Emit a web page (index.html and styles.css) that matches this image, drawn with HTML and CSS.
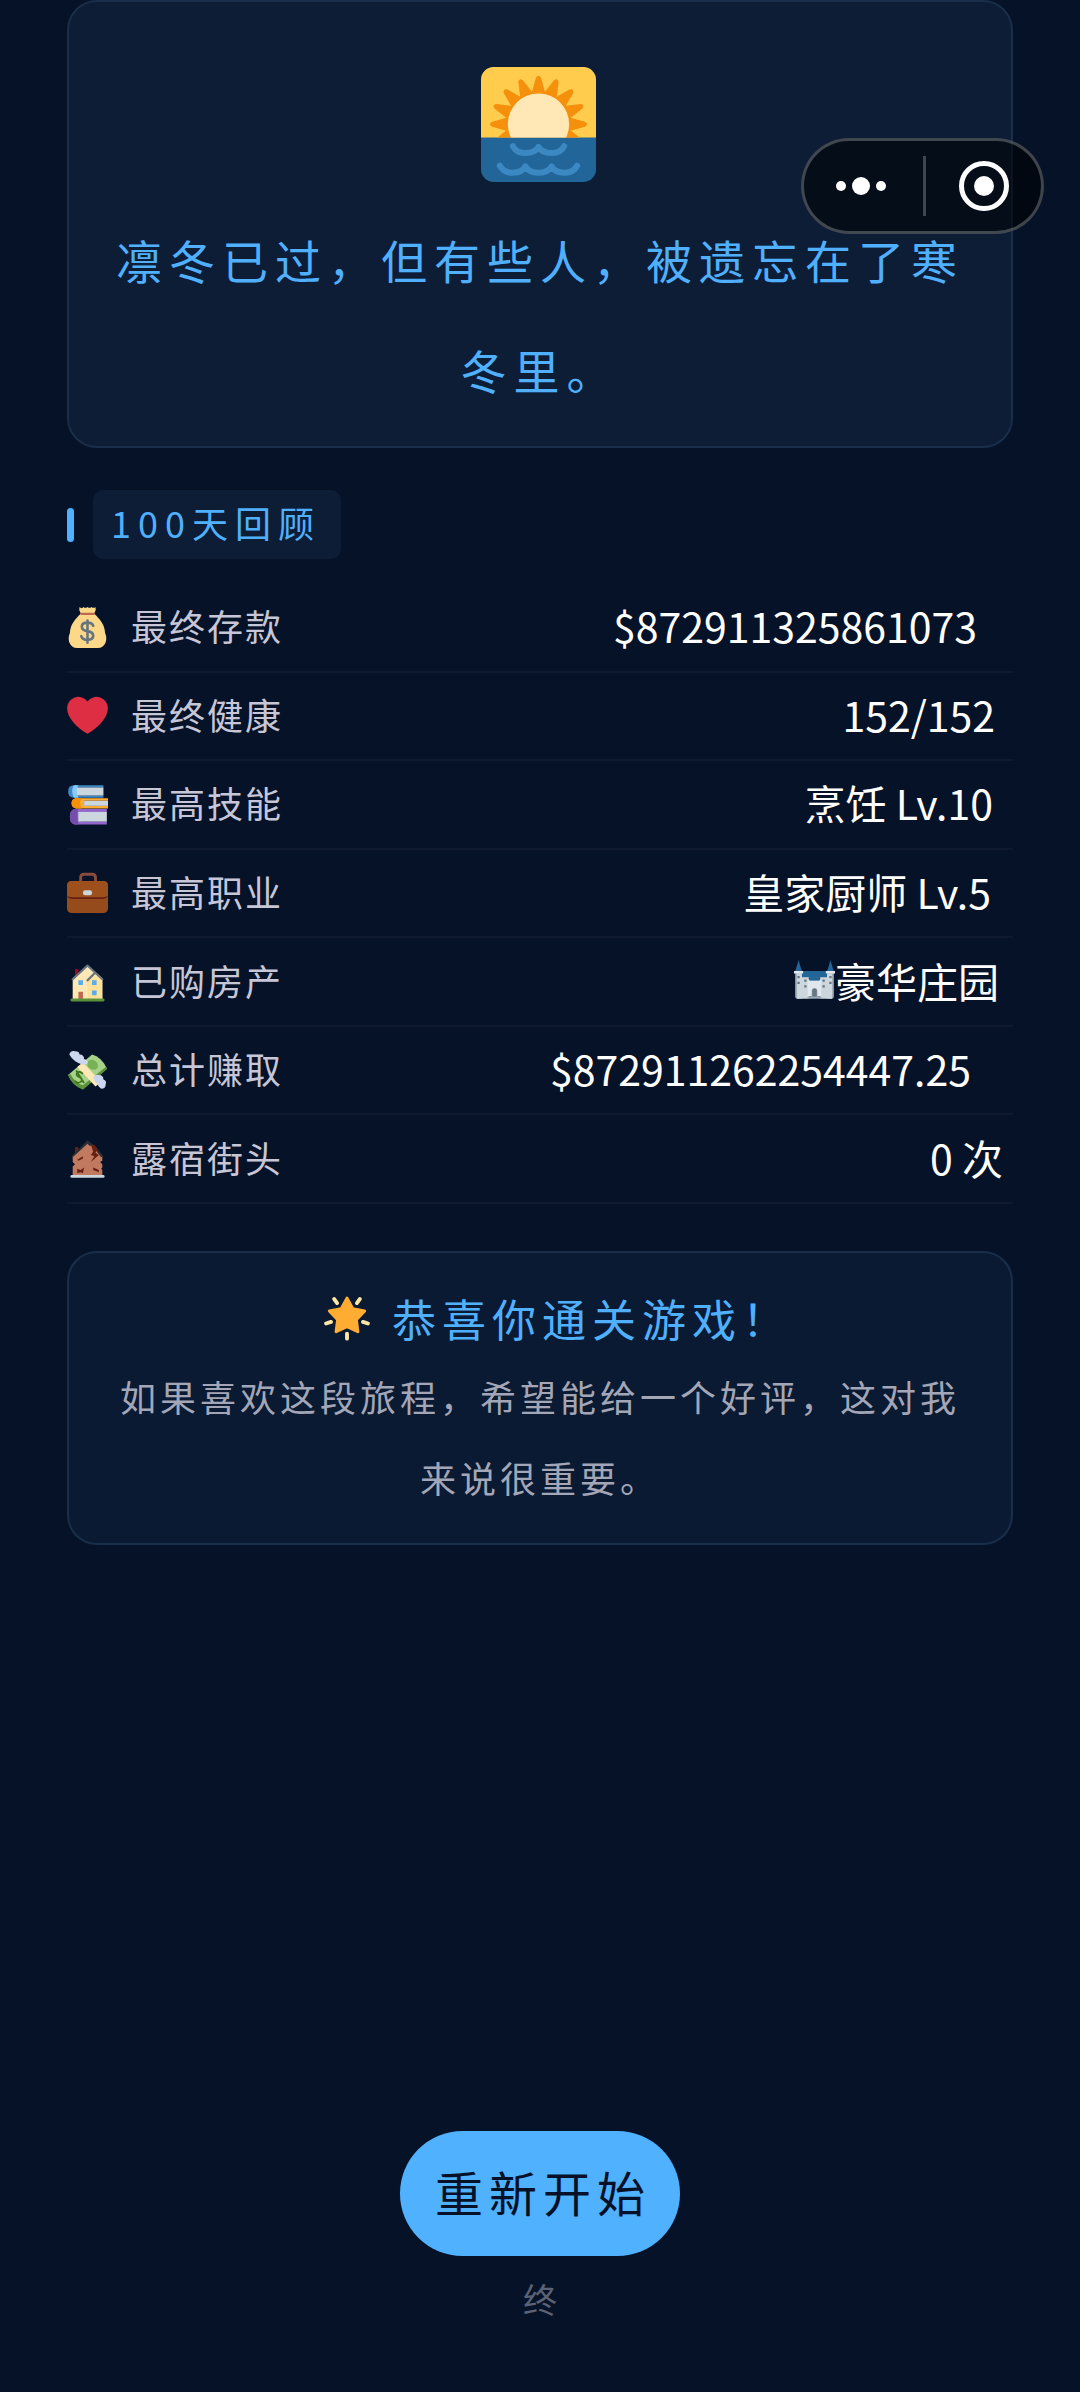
FILE: index.html
```html
<!DOCTYPE html>
<html lang="zh-CN">
<head>
<meta charset="utf-8">
<meta name="viewport" content="width=device-width, initial-scale=1">
<title>100天回顾</title>
<link rel="stylesheet" href="styles.css">
</head>
<body>
<nav class="capsule" aria-label="小程序菜单">
  <button class="capsule-button capsule-more" type="button" aria-label="更多">
    <svg width="52" height="20" viewBox="0 0 52 20" fill="#fff"><circle cx="6" cy="10" r="5"/><circle cx="26" cy="10" r="9"/><circle cx="46" cy="10" r="5"/></svg>
  </button>
  <button class="capsule-button capsule-close" type="button" aria-label="关闭">
    <svg width="50" height="50" viewBox="0 0 50 50"><circle cx="25" cy="25" r="22.5" fill="none" stroke="#fff" stroke-width="5"/><circle cx="25" cy="25" r="10" fill="#fff"/></svg>
  </button>
</nav>
<main class="page">
  <section class="card ending">
    <svg class="ending-icon" viewBox="0 0 36 36" preserveAspectRatio="xMinYMid" aria-hidden="true">
      <defs>
        <clipPath id="sky"><path d="M4 0h28a4 4 0 0 1 4 4v18.100H0V4a4 4 0 0 1 4-4z"/></clipPath>
        <path id="ray" d="M15.500 9.500L17.200 3.400Q18 2 18.800 3.400L20.500 9.500z"/>
      </defs>
      <rect width="36" height="36" rx="4" fill="#226699"/>
      <g clip-path="url(#sky)">
        <path d="M0 0h36v23H0z" fill="#ffcc4d"/>
        <g fill="#f4900c">
          <use href="#ray"/>
          <use href="#ray" transform="rotate(22.500 18 17.900)"/><use href="#ray" transform="rotate(45 18 17.900)"/><use href="#ray" transform="rotate(67.500 18 17.900)"/><use href="#ray" transform="rotate(90 18 17.900)"/><use href="#ray" transform="rotate(112.500 18 17.900)"/>
          <use href="#ray" transform="rotate(-22.500 18 17.900)"/><use href="#ray" transform="rotate(-45 18 17.900)"/><use href="#ray" transform="rotate(-67.500 18 17.900)"/><use href="#ray" transform="rotate(-90 18 17.900)"/><use href="#ray" transform="rotate(-112.500 18 17.900)"/>
        </g>
        <circle cx="18" cy="17.900" r="9.600" fill="#ffe8b6"/>
      </g>
      <path d="M10 24.800Q11 26.900 13.800 26.900Q17 26.900 18 25Q19 26.900 22.200 26.900Q25 26.900 26 24.800M5.900 30.900Q7 33.100 9.800 33.100Q13 33.100 13.900 31.100Q15 33.100 18 33.100Q21 33.100 22.100 31.100Q23 33.100 26.200 33.100Q29 33.100 30.100 30.900" fill="none" stroke="#3b88c3" stroke-width="1.900" stroke-linecap="round" stroke-linejoin="round"/>
    </svg>
    <h1 class="ending-text">凛冬已过，但有些人，被遗忘在了寒冬里。</h1>
  </section>

  <div class="section-head">
    <span class="section-bar"></span>
    <h2 class="section-title">100天回顾</h2>
  </div>

  <table class="stats">
    <tbody>
      <tr>
        <th scope="row"><span class="label">
          <svg class="icon" viewBox="0 0 36 36" aria-hidden="true"><path d="M12 6h12c5 5 9 9 9.500 17C36 28 34 36 27 36H9C2 36 0 28 2.500 23 3 15 7 11 12 6z" fill="#fdd888"/><path d="M11 0q2 2 3.500 0 1.500 1.500 3.500 0 2 1.500 3.500 0 2 1.500 3.500 0 1 3-1 5.500H12Q10 3 11 0z" fill="#fdd888"/><path d="M12.500 6h11" stroke="#bf6952" stroke-width="2" stroke-linecap="round"/><path d="M23 16.500q-1-2.800-5-2.800-5 0-5 3.600 0 3 5 3.900t5 4.100q0 3.600-5 3.600-4.500 0-5.500-3.300M18 11.800v19.500" fill="none" stroke="#67757f" stroke-width="2.300" stroke-linecap="round"/></svg>
          最终存款</span></th>
        <td style="--chars:16">$872911325861073</td>
      </tr>
      <tr>
        <th scope="row"><span class="label">
          <svg class="icon" viewBox="0 0 36 36" aria-hidden="true"><path d="M35.900 11.800A9.900 9.900 0 0 0 18 5.700 9.900 9.900 0 0 0 .1 11.800C.1 20 9 29 18 34c9-5 17.900-14 17.900-22.200z" fill="#dd2e44"/></svg>
          最终健康</span></th>
        <td style="--chars:7">152/152</td>
      </tr>
      <tr>
        <th scope="row"><span class="label">
          <svg class="icon" viewBox="0 0 36 36" aria-hidden="true"><path d="M6 1h26v2H8v7h24v2H6Q1 12 1 6.500T6 1z" fill="#3b88c3"/><path d="M8 3h24v7H8Q6 6.500 8 3z" fill="#ccd6dd"/><path d="M6 1h4q-3 5 0 11H6Q3 6 6 1z" fill="#88c9f9"/><path d="M8 12.500h28v2.300H15v4.400h21v2.300H8q-4-.5-4-4.500t4-4.500z" fill="#ffac33"/><path d="M15 14.800h21v4.400H15z" fill="#ccd6dd"/><path d="M8 12.500h5q-3 4 0 9H8q-4-.5-4-4.500t4-4.500z" fill="#f4900c"/><path d="M7 22h28v2.500H12v8.500h23v2.500H7Q2.500 35 2.500 28.700T7 22z" fill="#9266cc"/><path d="M10 24.500h25V33H10z" fill="#ccd6dd"/><path d="M7 22h3q-2 6 0 13.500H7Q2.500 35 2.500 28.700T7 22z" fill="#744eaa"/></svg>
          最高技能</span></th>
        <td style="--chars:8">烹饪 Lv.10</td>
      </tr>
      <tr>
        <th scope="row"><span class="label">
          <svg class="icon" viewBox="0 0 36 36" aria-hidden="true"><path d="M12 9V5q0-3 3-3h7q3 0 3 3v4" fill="none" stroke="#8a4b38" stroke-width="2.600"/><rect y="8" width="36" height="28" rx="4" fill="#954b1b"/><path d="M1 21q1 2 4 2h26q3 0 4-2" fill="none" stroke="#662113" stroke-width="1.600"/><path d="M4 8h28q4 0 4 4v7q0 3-4 3H4q-4 0-4-3v-7q0-4 4-4z" fill="#9d4f1c"/><rect x="14" y="16" width="8" height="4.500" rx="2" fill="#ccd6dd"/></svg>
          最高职业</span></th>
        <td style="--chars:9">皇家厨师 Lv.5</td>
      </tr>
      <tr>
        <th scope="row"><span class="label">
          <svg class="icon" viewBox="0 0 36 36" aria-hidden="true"><path d="M7 7h3v7H7z" fill="#a0041e"/><path d="M5 16L18 4l13 11v19H5z" fill="#ffe8b6"/><path d="M18 18l5-7 8 6v17H18z" fill="#ffe19a"/><path d="M5 16L18 4l13 12M18 17l6-6" fill="none" stroke="#66757f" stroke-width="1.900" stroke-linecap="round" stroke-linejoin="round"/><path d="M10 17h4v4h-4zM22 17h4v4h-4zM22 26h4v4h-4z" fill="#55acee"/><path d="M10 27h4v7h-4z" fill="#c1694f"/><rect x="3" y="33" width="30" height="2.500" rx="1.200" fill="#5c913b"/></svg>
          已购房产</span></th>
        <td style="--chars:5"><span class="value-with-icon"><svg class="icon" viewBox="0 0 36 36" aria-hidden="true"><path d="M4 1l3 10H1zM32 1l3 10h-6zM7 10.500h22V17H7z" fill="#269"/><path d="M1 12h6v23H3q-2 0-2-2zM29 12h6v21q0 2-2 2h-4z" fill="#99aab5"/><path d="M2.500 13H7v22H2.500zM29 13h4.500v22H29zM7 16h6v19H7zM23 16h6v19h-6z" fill="#ccd6dd"/><path d="M0 10.500h8v2.300H0zM28 10.500h8v2.300h-8zM12 18h2.500v-1.500H17V18h2v-1.500h2.500V18H24v15H12z" fill="#e1e8ed"/><path d="M13.500 16h9v3h-9z" fill="#269"/><path d="M3 15h2v2H3zM3 20h2v2H3zM31 15h2v2h-2zM31 20h2v2h-2zM9 18h2v2H9zM9 23h2v2H9zM25 18h2v2h-2zM25 23h2v2h-2z" fill="#66757f"/><path d="M12 33h3.500v-5a2.500 2.500 0 0 1 5 0v5H24v2H12z" fill="#99aab5"/><path d="M16 33v-5a2 2 0 0 1 4 0v5z" fill="#66757f"/></svg>豪华庄园</span></td>
      </tr>
      <tr>
        <th scope="row"><span class="label">
          <svg class="icon" viewBox="0 0 36 36" aria-hidden="true"><path d="M1 22L22 4q8 2 13 12L14 34Q5 31 1 22z" fill="#a6d388"/><path d="M1 22l2-1q4 8 11 10L34 15l1 2-21 18Q4 31 1 22z" fill="#5c913b"/><ellipse cx="22.500" cy="13" rx="5" ry="4" transform="rotate(35 22.500 13)" fill="#77b255"/><path d="M9 15l5-4 16 17-5 4z" fill="#ffe8b6"/><path d="M14 21q-3-3-5-1t2 4 1 4-5-1M8 18l7 11" fill="none" stroke="#3e721d" stroke-width="1.500"/><path d="M14 13Q6 11 2 4q1-4 5-3 4 0 4 3 4 0 4 4 4 1 3 4zM23 24q2-3 5-2 4 0 4 4 3 1 2 4 0 4-4 4-4-3-7-10z" fill="#ccd6ee"/></svg>
          总计赚取</span></th>
        <td style="--chars:19">$872911262254447.25</td>
      </tr>
      <tr>
        <th scope="row"><span class="label">
          <svg class="icon" viewBox="0 0 36 36" aria-hidden="true"><path d="M7 8h3v8H7z" fill="#662113"/><path d="M5 16L18 4l5 3 8 9v4l-2 1 2 2v3l-1 1 1 1v6H5v-9l2-2-2-2z" fill="#c1795f"/><path d="M4 16L18 2l5 4-3 1-2-2L5 17zM25 7l7 9-2 1-6-8z" fill="#292f33"/><path d="M21 6l2 6-2 3 3 1-3 5 7-6-3-2 2-3-3-4zM9 19l5-3v2l-4 2zM9 27l3 1 3-2-1 5-2-1-3 1zM23 26l5 2v2l-5-2z" fill="#662113"/><rect x="3" y="32.500" width="30" height="2.500" rx="1.200" fill="#ccd6dd"/></svg>
          露宿街头</span></th>
        <td style="--chars:3">0 次</td>
      </tr>
    </tbody>
  </table>

  <section class="card thanks">
    <h2 class="thanks-title">
      <svg class="star" viewBox="0 0 36 36" aria-hidden="true"><g fill="#ffe8a6"><rect id="spark" x="16.500" y="28.700" width="3" height="7" rx="1.500"/><use href="#spark" transform="rotate(72 18 17)"/><use href="#spark" transform="rotate(144 18 17)"/><use href="#spark" transform="rotate(216 18 17)"/><use href="#spark" transform="rotate(288 18 17)"/></g><path d="M18 2.500L22.500 10.800 31.800 12.500 25.300 19.400 26.500 28.700 18 24.700 9.500 28.700 10.700 19.400 4.200 12.500 13.500 10.800z" fill="#ffac33" stroke="#ffac33" stroke-width="2.400" stroke-linejoin="round"/></svg>
      恭喜你通关游戏！</h2>
    <p class="thanks-text">如果喜欢这段旅程，希望能给一个好评，这对我来说很重要。</p>
  </section>

  <footer class="footer">
    <button class="restart" type="button">重新开始</button>
    <p class="the-end">终</p>
  </footer>
</main>
</body>
</html>
```
FILE: styles.css
```css
* {
  box-sizing: border-box;
}

body {
  margin: 0;
  position: relative;
  background: #061228;
  color: #fff;
  font-family: "Noto Sans CJK SC", sans-serif;
  font-size: 36px;
}

h1, h2, p {
  margin: 0;
  font-weight: 400;
}

button {
  border: 0;
  padding: 0;
  background: none;
  font: inherit;
  cursor: pointer;
}

svg {
  display: block;
  flex: none;
}

.page {
  min-height: 100vh;
  padding: 0 67px 70px;
  display: flex;
  flex-direction: column;
}

.card {
  border: 2px solid #192e49;
  border-radius: 30px;
  text-align: center;
}

.ending {
  padding: 65px 40px 22px;
  background: #0d1d36;
}

.ending-icon {
  width: 119px;
  height: 115px;
  margin: 0 auto 22px;
}

.ending-text {
  color: #50b0fd;
  font-size: 46px;
  line-height: 110px;
  letter-spacing: 7px;
}

/* Floating host menu in the top right corner */
.capsule {
  position: absolute;
  top: 138px;
  right: 36px;
  width: 243px;
  height: 96px;
  display: flex;
  align-items: center;
  border: 3px solid rgba(255, 255, 255, 0.24);
  border-radius: 48px;
  background: rgba(0, 0, 0, 0.54);
}

.capsule-button {
  width: 50%;
  height: 60px;
  display: flex;
  align-items: center;
  justify-content: center;
}

.capsule-more {
  padding-right: 4px;
}

.capsule-close {
  padding-left: 2px;
  border-left: 3px solid rgba(255, 255, 255, 0.24);
}

.section-head {
  margin: 42px 0 25px;
  display: flex;
  align-items: center;
  gap: 19px;
}

.section-bar {
  width: 7px;
  height: 34px;
  border-radius: 4px;
  background: #50b2ff;
}

.section-title {
  padding: 0 20px 4px 18px;
  border-radius: 10px;
  background: #0d1d36;
  color: #50b0fd;
  font-size: 36px;
  line-height: 65px;
  letter-spacing: 7px;
}

.stats {
  width: 100%;
  height: 620px;
  border-spacing: 0;
}

.stats th,
.stats td {
  padding: 0 0 4px;
  border-bottom: 2px solid #0f1a30;
  font-weight: 400;
  vertical-align: middle;
}

.label {
  display: flex;
  align-items: center;
  gap: 23px;
  color: #c6c6d6;
  line-height: 44px;
  letter-spacing: 2px;
}

.icon {
  width: 41px;
  height: 41px;
}

.label .icon {
  margin-top: 4px;
}

/* Every character of a value reserves 2px of room at the end of its row */
.stats td {
  padding-right: calc(var(--chars) * 2px + 4px);
  font-size: 41px;
  line-height: 44px;
  text-align: right;
  white-space: nowrap;
}

.value-with-icon {
  display: flex;
  align-items: center;
  justify-content: flex-end;
}

.thanks {
  margin-top: 47px;
  padding: 35px 40px 25px;
  background: #0a1a32;
}

/* The full-width exclamation mark ends in blank space; the left padding balances it */
.thanks-title {
  padding-left: 36px;
  display: flex;
  align-items: center;
  justify-content: center;
  gap: 22px;
  color: #50b0fd;
  font-size: 44px;
  line-height: 60px;
  letter-spacing: 6px;
}

.star {
  width: 46px;
  height: 46px;
}

.thanks-text {
  margin-top: 8px;
  color: #a3a6b7;
  line-height: 81px;
  letter-spacing: 4px;
}

.footer {
  margin-top: auto;
  display: flex;
  flex-direction: column;
  align-items: center;
  gap: 20px;
}

.restart {
  padding: 0 29px 4px 35px;
  border-radius: 63px;
  background: #50b2ff;
  color: #061127;
  font-size: 48px;
  line-height: 121px;
  letter-spacing: 6px;
}

.the-end {
  color: #5b6273;
  font-size: 34px;
  line-height: 46px;
}
```
